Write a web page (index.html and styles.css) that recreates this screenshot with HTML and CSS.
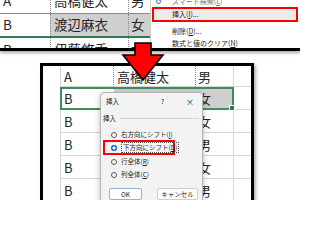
FILE: index.html
```html
<!DOCTYPE html>
<html lang="ja">
<head>
<meta charset="utf-8">
<title>挿入</title>
<link rel="stylesheet" href="styles.css">
</head>
<body>
<div class="page">
  <section class="top">
    <div class="tsheet">
      <div class="trow r1"><span class="tc ta">A</span><span class="tc tb">高橋健太</span><span class="tc tcc">男</span></div>
      <div class="trow r2"><span class="tc ta">B</span><span class="tc tb gray">渡辺麻衣</span><span class="tc tcc gray">女</span></div>
      <div class="trow r3"><span class="tc ta">B</span><span class="tc tb">伊藤悠香</span><span class="tc tcc">女</span></div>
    </div>
    <ul class="menu">
      <li class="mi cut"><span class="micon"></span>スマート検索(<u>L</u>)</li>
      <li class="mi hl">挿入(<u>I</u>)...</li>
      <li class="mi gap">削除(<u>D</u>)...</li>
      <li class="mi">数式と値のクリア(<u>N</u>)</li>
    </ul>
  </section>

  <section class="bottom">
    <div class="srow first">
      <span class="lead"></span>
      <span class="cell ca">A</span><span class="cell cb">高橋健太</span><span class="cell cc">男</span><span class="cell cd"></span>
    </div>
    <div class="srow">
      <span class="lead nob"></span>
      <div class="selbox">
        <span class="scell sa">B</span><span class="scell sb">渡辺麻衣</span><span class="scell sc">女</span>
        <span class="handle"></span>
      </div>
      <span class="cell cd"></span>
    </div>
    <div class="srow">
      <span class="lead"></span>
      <span class="cell ca">B</span><span class="cell cb">伊藤悠香</span><span class="cell cc">女</span><span class="cell cd"></span>
    </div>
    <div class="srow">
      <span class="lead"></span>
      <span class="cell ca">B</span><span class="cell cb">佐藤大輔</span><span class="cell cc">男</span><span class="cell cd"></span>
    </div>
    <div class="srow">
      <span class="lead"></span>
      <span class="cell ca">B</span><span class="cell cb">鈴木美咲</span><span class="cell cc">女</span><span class="cell cd"></span>
    </div>
    <div class="srow">
      <span class="lead"></span>
      <span class="cell ca">B</span><span class="cell cb">田中翔太</span><span class="cell cc">男</span><span class="cell cd"></span>
    </div>

    <div class="dialog">
      <div class="dtitle"><span class="dname">挿入</span><span class="dq">?</span><span class="dx">×</span></div>
      <div class="dhead"><span>挿入</span><span class="dline"></span></div>
      <div class="opt"><span class="radio"></span>右方向にシフト(<u>I</u>)</div>
      <div class="opt on"><span class="radio checked"></span><span class="focus">下方向にシフト(<u>D</u>)</span></div>
      <div class="opt"><span class="radio"></span>行全体(<u>R</u>)</div>
      <div class="opt"><span class="radio"></span>列全体(<u>C</u>)</div>
      <div class="btns"><span class="btn ok">OK</span><span class="btn cancel">キャンセル</span></div>
    </div>
  </section>

  <svg class="arrow" width="48" height="44" viewBox="0 0 48 44">
    <polygon points="15,3 31,3 31,15 43,15 23,40 3,15 15,15" fill="#ff0000" stroke="#000" stroke-width="1.6" stroke-linejoin="miter"/>
  </svg>
</div>
</body>
</html>
```

FILE: styles.css
```css
html, body {
  margin: 0;
  padding: 0;
  background: #fff;
}
.page {
  position: relative;
  width: 300px;
  height: 200px;
  overflow: hidden;
  background: #fff;
  font-family: "Noto Sans CJK JP", "Noto Sans", sans-serif;
}

/* ---------- top screenshot ---------- */
.top {
  position: relative;
  z-index: 1;
  display: flex;
  height: 51px;
  box-sizing: border-box;
  border-bottom: 3px solid #000;
  box-shadow: 0 2px 3px rgba(0, 0, 0, 0.35);
  overflow: hidden;
  background: #fff;
}
.tsheet {
  width: 150px;
  flex: none;
}
.trow {
  display: flex;
  box-sizing: border-box;
  height: 24px;
  border-bottom: 1px solid #d6d6d6;
}
.trow.r1 {
  height: 25px;
  margin-top: -11px;
  border-bottom: 1px solid #5fa27a;
}
.trow.r2 {
  height: 24px;
  border-bottom: 2px solid #2f7d50;
}
.tc {
  box-sizing: border-box;
  display: flex;
  align-items: center;
  height: 100%;
  font-size: 13.5px;
  line-height: 1;
  color: #262626;
  white-space: nowrap;
  overflow: hidden;
}
.ta { width: 50px; padding-left: 3px; }
.tb { width: 78px; padding-left: 3px; border-left: 1px dotted #8a8a8a; }
.tcc { width: 22px; padding-left: 2px; border-left: 1px dotted #8a8a8a; }
.tc.gray { background: #cfcfcf; }

.menu {
  flex: none;
  width: 150px;
  margin: 0;
  padding: 0;
  list-style: none;
  box-sizing: border-box;
  border-left: 1px solid #cfcfcf;
  background: #fff;
  font-size: 7px;
  line-height: 1;
  color: #1a1a1a;
}
.mi {
  display: flex;
  align-items: center;
  height: 12px;
  padding-left: 21px;
  white-space: nowrap;
}
.mi u { text-decoration: underline; }
.mi.cut {
  margin-top: -5px;
  padding-left: 5px;
  color: #777;
}
.micon {
  width: 5px;
  height: 5px;
  margin-right: 11px;
  border-radius: 50%;
  border: 1px solid #2b6cb0;
  box-sizing: border-box;
}
.mi.hl {
  box-sizing: border-box;
  height: 15px;
  margin: 0 2px 0 1px;
  padding-left: 18px;
  border: 2px solid #ff0000;
  background: #ebebeb;
}
.mi.gap { margin-top: 3px; }

/* ---------- bottom screenshot ---------- */
.bottom {
  position: relative;
  width: 214px;
  height: 200px;
  box-sizing: border-box;
  margin: 12px 0 0 40px;
  border: 3px solid #000;
  border-bottom: none;
  box-shadow: 2px 2px 3px rgba(0, 0, 0, 0.3);
  background: #fff;
}
.srow {
  display: flex;
  height: 23px;
}
.srow.first { height: 21px; }
.lead {
  box-sizing: border-box;
  width: 18px;
  flex: none;
  border-right: 1px solid #d6d6d6;
}
.lead.nob {
  width: 17px;
  border-right: none;
}
.cell {
  box-sizing: border-box;
  display: flex;
  align-items: center;
  height: 100%;
  flex: none;
  border-bottom: 1px solid #d6d6d6;
  font-size: 13px;
  line-height: 1;
  color: #262626;
  white-space: nowrap;
  overflow: hidden;
}
.ca { width: 53px; padding-left: 3px; border-right: 1px dotted #8a8a8a; }
.cb { width: 82px; padding-left: 3px; border-right: 1px dotted #8a8a8a; }
.cc { width: 38px; padding-left: 2px; border-right: 1px solid #d6d6d6; }
.cd { width: 17px; }

.selbox {
  position: relative;
  box-sizing: border-box;
  display: flex;
  flex: none;
  width: 174px;
  height: 23px;
  border: 2px solid #3f8d5d;
}
.scell {
  box-sizing: border-box;
  display: flex;
  align-items: center;
  height: 100%;
  font-size: 13px;
  line-height: 1;
  color: #262626;
  white-space: nowrap;
  overflow: hidden;
}
.sa { width: 52px; padding-left: 2px; }
.sb { width: 82px; padding-left: 3px; background: #cfcfcf; }
.sc { width: 36px; padding-left: 2px; background: #cfcfcf; }
.handle {
  position: absolute;
  right: -3px;
  bottom: -3px;
  width: 4px;
  height: 4px;
  background: #2f7d50;
  border: 1px solid #fff;
}

/* ---------- dialog ---------- */
.dialog {
  position: absolute;
  left: 57px;
  top: 26px;
  width: 103px;
  height: 140px;
  box-sizing: border-box;
  background: #f3f3f3;
  border: 1px solid #b4b4b4;
  border-radius: 4px;
  box-shadow: 0 2px 6px rgba(0, 0, 0, 0.25);
  font-size: 6.5px;
  line-height: 1;
  color: #1f1f1f;
}
.dtitle {
  display: flex;
  align-items: center;
  height: 17px;
  padding: 0 8px 0 5px;
}
.dname { flex: 1; }
.dq { margin-right: 22px; }
.dx { font-size: 8px; }
.dhead {
  display: flex;
  align-items: center;
  height: 8px;
  margin: 4px 3px 0 2px;
}
.dline {
  flex: 1;
  height: 1px;
  margin-left: 4px;
  background: #d2d2d2;
}
.opt {
  display: flex;
  align-items: center;
  height: 13px;
  padding-left: 10px;
  white-space: nowrap;
}
.opt:nth-of-type(3) { margin-top: 6px; }
.opt.on {
  box-sizing: border-box;
  width: 72px;
  height: 15px;
  margin: 0 0 -1px 2px;
  padding-left: 6px;
  border: 2px solid #ff0000;
  position: relative;
  top: -1px;
}
.radio {
  box-sizing: border-box;
  width: 6px;
  height: 6px;
  margin-right: 4px;
  border-radius: 50%;
  border: 1px solid #5a5a5a;
  background: #fff;
  flex: none;
}
.radio.checked {
  border: none;
  background: radial-gradient(circle, #fff 0 1.3px, #0067c0 1.8px);
}
.focus {
  padding: 1px 1px;
  border: 1px dotted #555;
}
.btns {
  display: flex;
  gap: 15px;
  margin: 7px 0 0 8px;
}
.btn {
  box-sizing: border-box;
  display: flex;
  align-items: center;
  justify-content: center;
  height: 12px;
  border-radius: 2px;
  background: #fdfdfd;
  border: 1px solid #cdcdcd;
}
.btn.ok { width: 33px; border-color: #8fb3da; }
.btn.cancel { width: 41px; }

/* ---------- arrow ---------- */
.arrow {
  position: absolute;
  left: 120px;
  top: 40px;
  z-index: 5;
}
```
